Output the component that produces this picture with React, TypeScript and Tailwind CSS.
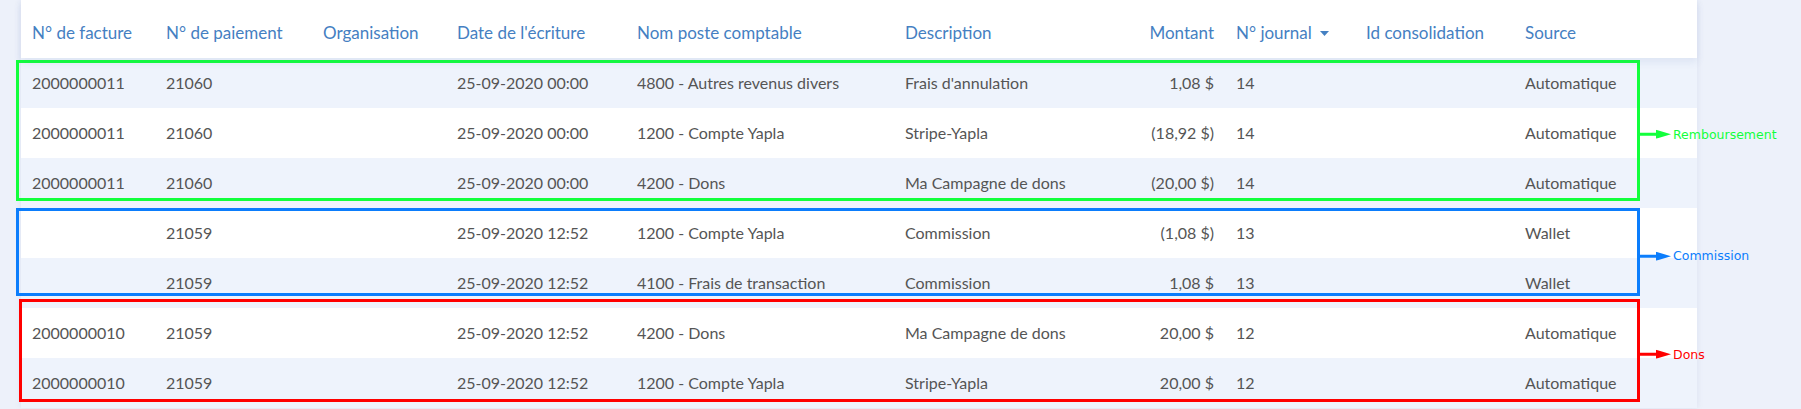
import React from "react";

const cols =
  "grid grid-cols-[134px_157px_134px_180px_268px_201px_130px_130px_159px_183px]";

const rows = [
  ["2000000011", "21060", "", "25-09-2020 00:00", "4800 - Autres revenus divers", "Frais d'annulation", "1,08 $", "14", "", "Automatique"],
  ["2000000011", "21060", "", "25-09-2020 00:00", "1200 - Compte Yapla", "Stripe-Yapla", "(18,92 $)", "14", "", "Automatique"],
  ["2000000011", "21060", "", "25-09-2020 00:00", "4200 - Dons", "Ma Campagne de dons", "(20,00 $)", "14", "", "Automatique"],
  ["", "21059", "", "25-09-2020 12:52", "1200 - Compte Yapla", "Commission", "(1,08 $)", "13", "", "Wallet"],
  ["", "21059", "", "25-09-2020 12:52", "4100 - Frais de transaction", "Commission", "1,08 $", "13", "", "Wallet"],
  ["2000000010", "21059", "", "25-09-2020 12:52", "4200 - Dons", "Ma Campagne de dons", "20,00 $", "12", "", "Automatique"],
  ["2000000010", "21059", "", "25-09-2020 12:52", "1200 - Compte Yapla", "Stripe-Yapla", "20,00 $", "12", "", "Automatique"],
];

const headers = [
  "N° de facture",
  "N° de paiement",
  "Organisation",
  "Date de l'écriture",
  "Nom poste comptable",
  "Description",
  "Montant",
  "N° journal",
  "Id consolidation",
  "Source",
];

// arrow + label hanging off the right edge of an annotation box
function Arrow({ color, label }: { color: string; label: string }) {
  return (
    <div className="absolute left-full top-[calc(50%+4px)] flex -translate-y-1/2 items-center">
      <div className="h-[3px] w-[19px]" style={{ backgroundColor: color }} />
      <svg width="15" height="9" viewBox="0 0 15 9">
        <polygon points="0,0 15,4.5 0,9" fill={color} />
      </svg>
      <span
        className="ml-[2px] text-[12.5px] leading-none font-['DejaVu_Sans',sans-serif]"
        style={{ color }}
      >
        {label}
      </span>
    </div>
  );
}

export default function App() {
  return (
    <div className="relative h-[409px] w-full overflow-hidden bg-[#edf1fa] font-['Lato',sans-serif]">
      <div className="ml-[21px] w-[1676px] bg-white shadow-[0_0_6px_rgba(120,140,190,0.15)]">
        <div
          className={`${cols} relative z-10 h-[58px] items-center bg-white pt-[8px] text-[17px] text-[#4580c2] shadow-[0_4px_8px_rgba(70,100,170,0.10)]`}
        >
          {headers.map((h, i) => (
            <div
              key={h}
              className={`px-[11px] whitespace-nowrap ${i === 6 ? "text-right" : ""} ${i === 7 ? "flex items-center" : ""}`}
            >
              {h}
              {i === 7 && (
                <svg className="ml-[8px]" width="9" height="5" viewBox="0 0 9 5">
                  <polygon points="0,0 9,0 4.5,5" fill="#4580c2" />
                </svg>
              )}
            </div>
          ))}
        </div>
        {rows.map((r, ri) => (
          <div
            key={ri}
            className={`${cols} h-[50px] items-center text-[16px] text-[#555555] ${ri % 2 === 0 ? "bg-[#eef3fc]" : "bg-white"}`}
          >
            {r.map((c, ci) => (
              <div
                key={ci}
                className={`px-[11px] whitespace-nowrap ${ci === 6 ? "text-right" : ""}`}
              >
                {c}
              </div>
            ))}
          </div>
        ))}
      </div>

      {/* annotation boxes drawn over the table */}
      <div className="absolute left-[16px] top-[60px] h-[141px] w-[1624px] border-[3px] border-[#12ff3c]">
        <Arrow color="#12ff3c" label="Remboursement" />
      </div>
      <div className="absolute left-[16px] top-[208px] h-[88px] w-[1624px] border-[3px] border-[#0b7dfc]">
        <Arrow color="#0b7dfc" label="Commission" />
      </div>
      <div className="absolute left-[19px] top-[299px] h-[103px] w-[1621px] border-[3px] border-[#ff0000]">
        <Arrow color="#ff0000" label="Dons" />
      </div>
    </div>
  );
}
